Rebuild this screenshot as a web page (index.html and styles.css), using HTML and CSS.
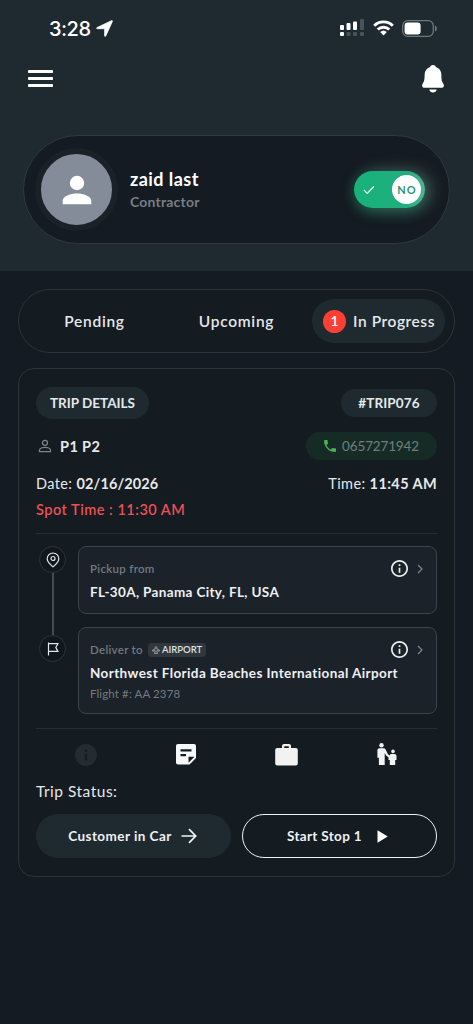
FILE: index.html
```html
<!DOCTYPE html>
<html lang="en">
<head>
<meta charset="utf-8">
<meta name="viewport" content="width=device-width, initial-scale=1">
<title>Trips</title>
<link rel="stylesheet" href="styles.css">
</head>
<body>
<header class="header">
  <div class="status-bar">
    <div class="clock"><span class="clock-time">3:28</span>
      <svg width="17" height="17" viewBox="0 0 16 16"><path d="M1 7.100 14.600.6c.6-.2 1 .2.8.8L9.200 15c-.3.7-1.100.5-1.100-.2V8.200H1.300C.5 8.200.3 7.400 1 7.100z" fill="#fff" stroke="#fff" stroke-width=".7"/></svg>
    </div>
    <div class="indicators">
      <svg width="26" height="18" viewBox="0 0 26 18"><g fill="#fff"><rect x="1" y="6" width="4" height="5" rx="1"/><rect x="7.500" y="4" width="4" height="7" rx="1"/><rect x="14" y="2.500" width="4" height="8.500" rx="1"/><rect x="1" y="13" width="4" height="4" rx="1"/></g><g fill="#46535b"><rect x="21" y="0" width="4" height="11" rx="1"/><rect x="7.500" y="13" width="4" height="4" rx="1"/><rect x="14" y="13" width="4" height="4" rx="1"/><rect x="21" y="13" width="4" height="4" rx="1"/></g></svg>
      <svg width="21" height="16" viewBox="0 0 21 16" fill="none" stroke="#fff" stroke-width="2.900"><path d="M1.200 5.700a13.300 13.300 0 0 1 18.600 0M4.700 9.500a8.400 8.400 0 0 1 11.600 0"/><path d="M7.200 12.100a4.800 4.800 0 0 1 6.600 0l-3.300 3.500z" fill="#fff" stroke="none"/></svg>
      <svg width="36" height="17" viewBox="0 0 36 17"><rect x=".7" y=".7" width="30.600" height="15.600" rx="5" fill="none" stroke="#6d777d" stroke-width="1.300"/><rect x="2.600" y="2.600" width="16" height="11.800" rx="3" fill="#fff"/><path d="M33 5.500c2.500.9 2.500 5.100 0 6z" fill="#6d777d"/></svg>
    </div>
  </div>
  <div class="nav">
    <svg width="25" height="18" viewBox="0 0 25 18" fill="#fff"><rect width="25" height="3" rx=".8"/><rect y="7" width="25" height="3" rx=".8"/><rect y="14" width="25" height="3" rx=".8"/></svg>
    <svg width="22" height="28" viewBox="0 0 22 28" fill="#fff"><path d="M11 0c-1.700 0-2.600.8-2.900 2C4.400 3.200 2.600 6.200 2.600 10c0 5-.5 6.500-1.700 8.200C-.5 20.200-.2 22.800 3 22.800h16c3.200 0 3.500-2.600 2.100-4.600-1.200-1.700-1.700-3.200-1.700-8.200 0-3.800-1.800-6.800-5.500-8C13.600.8 12.700 0 11 0zM7.300 24.600h7.400c-.3 1.700-1.800 3-3.700 3s-3.400-1.300-3.700-3z"/></svg>
  </div>
  <section class="profile">
    <div class="avatar"><svg width="30" height="30" viewBox="0 0 30 30" fill="#fff"><circle cx="15" cy="8" r="7.200"/><path d="M.7 29.300v-3.500c0-4.500 8-7.200 14.300-7.200s14.300 2.700 14.300 7.200v3.500z"/></svg></div>
    <div class="identity"><div class="name">zaid last</div><div class="role">Contractor</div></div>
    <div class="toggle">
      <svg width="12" height="10" viewBox="0 0 12 10" fill="none" stroke="#e8fff5" stroke-width="1.300"><path d="M1 5l3.200 3.400L11 1.200"/></svg>
      <span class="knob">NO</span>
    </div>
  </section>
</header>
<main class="content">
  <nav class="tabs">
    <div class="tab">Pending</div>
    <div class="tab">Upcoming</div>
    <div class="tab tab-active"><span class="count">1</span><span>In Progress</span></div>
  </nav>
  <article class="card">
    <div class="row row-title"><span class="pill pill-title">TRIP DETAILS</span><span class="pill pill-id">#TRIP076</span></div>
    <div class="row row-person">
      <div class="person"><svg width="14" height="14" viewBox="0 0 14 14" fill="none" stroke="#7d858b" stroke-width="1.300"><circle cx="7" cy="3.800" r="2.500"/><path d="M1.500 12.600v-1.300c0-1.800 3-2.900 5.500-2.900s5.500 1.100 5.500 2.900v1.300z"/></svg><b>P1 P2</b></div>
      <div class="phone"><svg width="12" height="12" viewBox="3 3 18 18" fill="#4caf50"><path d="M6.620 10.790c1.440 2.830 3.760 5.140 6.590 6.590l2.200-2.200c.27-.27.67-.36 1.020-.24 1.120.37 2.330.57 3.570.57.550 0 1 .45 1 1V20c0 .55-.45 1-1 1-9.390 0-17-7.610-17-17 0-.55.45-1 1-1h3.500c.55 0 1 .45 1 1 0 1.250.2 2.450.57 3.570.11.35.03.74-.25 1.020l-2.200 2.200z"/></svg><span>0657271942</span></div>
    </div>
    <div class="row row-date"><div class="date">Date: <b>02/16/2026</b></div><div class="time">Time: <b>11:45 AM</b></div></div>
    <div class="spot">Spot Time : 11:30 AM</div>
    <div class="route">
      <div class="rail">
        <span class="stop"><svg width="14" height="16" viewBox="0 0 14 16" fill="none" stroke="#e3e6e9" stroke-width="1.200"><path d="M7 14.900C4.300 12.700 1.200 10 1.200 6.800a5.800 5.800 0 0 1 11.600 0c0 3.200-3.100 5.900-5.800 8.100z"/><circle cx="7" cy="6.500" r="2"/></svg></span>
        <span class="line"></span>
        <span class="stop"><svg width="12" height="14" viewBox="0 0 12 14" fill="none" stroke="#e3e6e9" stroke-width="1.200"><path d="M1.500.5v13M1.500 1.700h9.400L8.800 5.400l2.100 4H1.500"/></svg></span>
      </div>
      <div class="places">
        <div class="place">
          <div class="place-text"><div class="label">Pickup from</div><div class="address address-pickup">FL-30A, Panama City, FL, USA</div></div>
          <div class="place-actions"><svg width="17" height="17" viewBox="2 2 20 20" fill="#eceff1"><path d="M11 7h2v2h-2zm0 4h2v6h-2zm1-9C6.480 2 2 6.480 2 12s4.480 10 10 10 10-4.480 10-10S17.520 2 12 2zm0 18c-4.410 0-8-3.590-8-8s3.590-8 8-8 8 3.590 8 8-3.590 8-8 8z"/></svg><svg width="6" height="10" viewBox="0 0 6 10" fill="none" stroke="#7b8288" stroke-width="1.300"><path d="M1 1l4 4-4 4"/></svg></div>
        </div>
        <div class="place place-drop">
          <div class="place-text"><div class="label label-drop">Deliver to <span class="airport"><svg width="8" height="8" viewBox="0 0 8 8" fill="none" stroke="#a4aaaf" stroke-width=".9"><path d="M3.200 3V1.400C3.200.3 4.800.3 4.800 1.400V3l2.600 1.100v1L4.800 4.800v1.400l.9.7v.5H2.300v-.5l.9-.7V4.800L.6 5.100v-1z"/></svg>AIRPORT</span></div><div class="address">Northwest Florida Beaches International Airport</div><div class="flight">Flight #: AA 2378</div></div>
          <div class="place-actions"><svg width="17" height="17" viewBox="2 2 20 20" fill="#eceff1"><path d="M11 7h2v2h-2zm0 4h2v6h-2zm1-9C6.480 2 2 6.480 2 12s4.480 10 10 10 10-4.480 10-10S17.520 2 12 2zm0 18c-4.410 0-8-3.590-8-8s3.590-8 8-8 8 3.590 8 8-3.590 8-8 8z"/></svg><svg width="6" height="10" viewBox="0 0 6 10" fill="none" stroke="#7b8288" stroke-width="1.300"><path d="M1 1l4 4-4 4"/></svg></div>
        </div>
      </div>
    </div>
    <div class="tools">
      <span><svg width="22" height="22" viewBox="2 2 20 20" fill="#222c32"><path d="M12 2C6.480 2 2 6.480 2 12s4.480 10 10 10 10-4.480 10-10S17.520 2 12 2zm1 15h-2v-6h2v6zm0-8h-2V7h2v2z"/></svg></span>
      <span><svg width="20" height="21" viewBox="0 0 20 21"><path d="M2 0h16a2 2 0 0 1 2 2v12l-6.500 6.600H2a2 2 0 0 1-2-2V2a2 2 0 0 1 2-2z" fill="#f7f8fa"/><path d="M4.500 5.200h11v2.200h-11zM4.500 10.100h5.500v2.200H4.500zM12.500 18.800v-6h6z" fill="#141c22"/></svg></span>
      <span><svg width="23" height="22" viewBox="0 0 23 22"><path fill-rule="evenodd" d="M7 4V2a2 2 0 0 1 2-2h5a2 2 0 0 1 2 2v2h4.800a2 2 0 0 1 2 2v13.500a2 2 0 0 1-2 2H2.200a2 2 0 0 1-2-2V6a2 2 0 0 1 2-2zM9.200 4h4.600V2.200H9.200z" fill="#f2f2f2"/></svg></span>
      <span><svg width="20" height="23" viewBox="0 0 20 23" fill="#f2f3f5"><circle cx="4.500" cy="2.300" r="2.200"/><circle cx="16" cy="8.400" r="1.800"/><path d="M2.600 5.200h3.800c1 0 1.800.4 2.200 1.300l2.300 4.700 1.800 1.200c.3-.9.900-1.400 1.800-1.400h3c1.200 0 2 .8 2 2v4h-1.300V22h-5.400v-5h-1.300v-2.700l-2.200-1.600-1.600-2.600V22H1.900v-7.200H.4V7.400c0-1.300.9-2.200 2.200-2.200z"/></svg></span>
    </div>
    <div class="trip-status">Trip Status:</div>
    <div class="actions">
      <button class="btn btn-car"><span>Customer in Car</span><svg width="16" height="16" viewBox="0 0 16 16" fill="none" stroke="#f3f5f6" stroke-width="1.700"><path d="M.5 8h14M8 1.200 14.700 8 8 14.800"/></svg></button>
      <button class="btn btn-start"><span>Start Stop 1</span><svg width="11" height="13" viewBox="0 0 11 13" fill="#fff"><path d="M.5.3 10.700 6.500.5 12.700z"/></svg></button>
    </div>
  </article>
</main>
</body>
</html>
```
FILE: styles.css
```css
* { box-sizing: border-box; }
body {
  margin: 0;
  width: 473px;
  height: 1024px;
  overflow: hidden;
  background: #141b23;
  color: #e6e8ea;
  font-family: Lato, "Liberation Sans", sans-serif;
}
svg { display: block; flex: none; }
b { font-weight: 700; }

.header { height: 271px; background: #1f2a30; }
.status-bar { height: 56px; padding: 0 35px 0 49px; display: flex; justify-content: space-between; align-items: center; }
.clock { display: flex; align-items: center; gap: 5px; padding-top: 1px; }
.clock-time { font-family: Inter, sans-serif; font-weight: 500; font-size: 20px; letter-spacing: -0.5px; color: #fff; }
.indicators { display: flex; align-items: center; gap: 8px; }
.nav { height: 46px; padding: 0 29px 0 28px; display: flex; justify-content: space-between; align-items: center; }

.profile {
  margin: 33px 23px 0;
  height: 109px;
  padding: 0 24px 0 11px;
  border: 1px solid #303940;
  border-radius: 55px;
  background: #141b22;
  display: flex;
  align-items: center;
}
.avatar { width: 83px; height: 83px; border: 6px solid #1a2129; border-radius: 50%; background: #858c99; display: flex; align-items: center; justify-content: center; }
.identity { flex: 1; padding-left: 12px; }
.name { font-size: 18px; line-height: 24px; font-weight: 700; color: #fff; letter-spacing: 0.45px; }
.role { font-size: 14px; line-height: 22px; font-weight: 700; color: #777e84; letter-spacing: 0.2px; }
.toggle {
  width: 71px;
  height: 37px;
  padding: 0 4px 0 9px;
  border-radius: 19px;
  background: linear-gradient(90deg, #17b27b, #20ae7e 75%, #51b492);
  box-shadow: 0 4px 14px rgba(28, 174, 123, 0.38), 6px 0 18px rgba(190, 220, 210, 0.28);
  display: flex;
  align-items: center;
  justify-content: space-between;
}
.knob { width: 29px; height: 29px; border-radius: 50%; background: #fff; color: #2f9272; font-size: 11px; font-weight: 700; letter-spacing: 1px; padding-left: 1px; display: flex; align-items: center; justify-content: center; }

.content { padding: 18px 18px 0; }
.tabs { height: 64px; padding: 0 9px; border: 1px solid #2c353b; border-radius: 32px; background: #141b21; display: grid; grid-template-columns: 133px 1fr 133px; align-items: center; font-size: 15.500px; font-weight: 600; letter-spacing: 0.7px; }
.tab { text-align: center; line-height: 22px; }
.tab-active { height: 44px; padding: 0 10px 0 11px; border-radius: 22px; background: #1f2a30; letter-spacing: 0.55px; display: flex; align-items: center; justify-content: space-between; white-space: nowrap; }
.count { width: 23px; height: 23px; border-radius: 50%; background: #ff3f34; color: #fff; font-size: 14px; letter-spacing: 0; display: flex; align-items: center; justify-content: center; }

.card { margin-top: 15px; height: 509px; padding: 18px 17px 0; border: 1px solid #2c353b; border-radius: 16px; background: #141b21; }
.row { display: flex; justify-content: space-between; align-items: center; }
.row-title { height: 32px; }
.pill { background: #1f2a30; border-radius: 17px; display: flex; align-items: center; justify-content: center; font-size: 13.500px; font-weight: 700; white-space: nowrap; }
.pill-title { width: 113px; height: 32px; }
.pill-id { width: 96px; height: 28px; letter-spacing: 0.1px; }
.row-person { height: 28px; margin-top: 13px; }
.person { display: flex; align-items: center; gap: 8px; padding-left: 2px; font-size: 14.500px; letter-spacing: 0.4px; }
.phone { width: 131px; height: 28px; border-radius: 14px; background: #172b26; color: #6e7f7c; display: flex; align-items: center; justify-content: center; gap: 6px; font-size: 13.500px; letter-spacing: -0.15px; }
.row-date { height: 24px; margin-top: 11px; font-size: 14.500px; letter-spacing: 0.4px; }
.date b { letter-spacing: 0.1px; }
.spot { height: 39px; padding-top: 5px; line-height: 20px; border-bottom: 1px solid #252e34; color: #eb5055; font-size: 14.500px; font-weight: 600; letter-spacing: 0.5px; }

.route { display: flex; gap: 12px; padding: 12px 0 14px; border-bottom: 1px solid #252e34; }
.rail { width: 30px; padding-left: 3px; display: flex; flex-direction: column; align-items: center; }
.stop { width: 27px; height: 27px; border: 1px solid #2c353b; border-radius: 50%; background: #10171d; display: flex; align-items: center; justify-content: center; flex: none; }
.line { width: 2px; height: 62px; background: #444c52; }
.places { flex: 1; display: flex; flex-direction: column; gap: 13px; }
.place { height: 68px; border: 1px solid #3b444a; border-radius: 8px; background: #1b2229; padding: 12px 13px 0 11px; display: flex; justify-content: space-between; }
.place-drop { height: 87px; }
.place-text { white-space: nowrap; width: 310px; }
.label { font-size: 11.500px; font-weight: 600; line-height: 20px; color: #737a80; letter-spacing: 0.3px; }
.label-drop { display: flex; align-items: center; gap: 5px; }
.airport { height: 14px; padding: 0 4px; border-radius: 4px; background: #30373d; color: #dee1e4; font-size: 9.500px; letter-spacing: 0; display: flex; align-items: center; gap: 2px; }
.address { font-size: 13.500px; font-weight: 700; line-height: 26px; color: #eef0f3; letter-spacing: 0.4px; }
.address-pickup { letter-spacing: 0.35px; }
.flight { font-size: 11.500px; line-height: 16px; color: #747b80; letter-spacing: 0.12px; }
.place-actions { height: 19px; display: flex; align-items: center; gap: 9px; flex: none; margin-left: -30px; }

.tools { height: 51px; display: grid; grid-template-columns: repeat(4, 1fr); align-items: center; justify-items: center; }
.trip-status { height: 34px; line-height: 23px; font-size: 15.500px; letter-spacing: 0.5px; }
.actions { display: grid; grid-template-columns: 1fr 1fr; gap: 11px; }
.btn { height: 44px; padding: 0; border: none; border-radius: 22px; background: #1f2a30; color: #eff1f3; font: 700 13.500px Lato, "Liberation Sans", sans-serif; display: flex; align-items: center; justify-content: center; }
.btn-car { gap: 9px; letter-spacing: 0.45px; padding-right: 2px; }
.btn-start { border: 1px solid #f0f2f3; background: transparent; gap: 15px; letter-spacing: 0.35px; padding-right: 4px; }
```
